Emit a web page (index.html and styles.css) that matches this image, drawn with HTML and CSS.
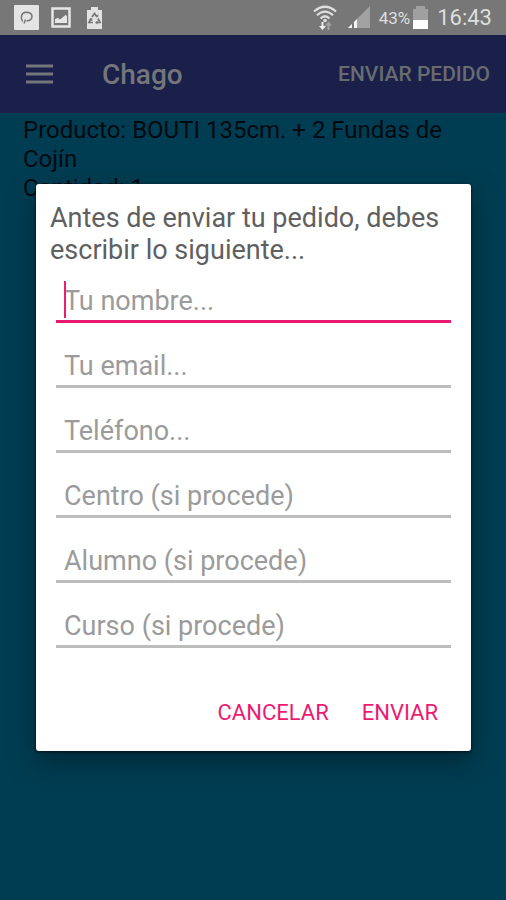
FILE: index.html
```html
<!DOCTYPE html>
<html lang="es">
<head>
<meta charset="utf-8">
<meta name="viewport" content="width=device-width, initial-scale=1">
<title>Chago</title>
<link rel="stylesheet" href="styles.css">
</head>
<body>
<div class="status">
  <div class="status-group notices">
    <svg width="25" height="25" viewBox="0 0 25 25" aria-hidden="true">
      <rect width="25" height="25" rx="1" fill="#e4e4e4"/>
      <path d="M8.500 16.500C6 12 7.500 7.500 12 7.200c4 0 6 2 6 4.300 0 3-2.500 4.500-5.500 4.200M10 18.500l1.500-4" fill="none" stroke="#777" stroke-width="1.500"/>
    </svg>
    <svg width="20" height="22" viewBox="0 0 20 22" aria-hidden="true">
      <rect x="1.500" y="1.500" width="17" height="18" fill="none" stroke="#e6e6e6" stroke-width="2.500"/>
      <path d="M4 16v-4l3-1 2 1.500L14.500 8 16 9v7z" fill="#e6e6e6"/>
    </svg>
    <svg width="17" height="22" viewBox="0 0 17 22" aria-hidden="true">
      <path d="M1 3h4V0h7v3h4v19H1z" fill="#e2e2e2"/>
      <path d="M6 10l2.500-3.500L11 10M12 11.500l2 4h-4M7 15.500H3l2-4" fill="none" stroke="#777" stroke-width="1.700"/>
      <path d="M10 8.500l2 2 .5-3zM11.500 13.500v4l-2.500-2zM3 12.500l3-1.500.5 3z" fill="#777"/>
    </svg>
  </div>
  <div class="status-group">
    <svg class="wifi" width="24" height="26" viewBox="0 0 24 26" aria-hidden="true">
      <g fill="none" stroke="#dedede" stroke-width="2.200">
        <path d="M1 6.500Q12-3 23 6.500M4 10.200Q12 3 20 10.200M7.500 13.500Q12 9 16.500 13.500"/>
      </g>
      <circle cx="12" cy="15.500" r="1.800" fill="#dedede"/>
      <path d="M8.500 17h2v4H13l-3.500 4L6 21h2.500z" fill="#eee"/>
      <path d="M14.500 25v-4.500H12l3.500-4 3.500 4h-2.500V25z" fill="#a4a4a4"/>
    </svg>
    <svg class="signal" width="23" height="23" viewBox="0 0 23 23" aria-hidden="true">
      <path d="M0 22L22 0v22z" fill="#a2a2a2"/>
      <path d="M0 22l4-4v4zM6 22v-6l3-3v9z" fill="#f4f4f4"/>
      <path d="M4 22v-4l2-2v6z" fill="#777"/>
    </svg>
    <span class="percent">43%</span>
    <svg class="battery" width="15" height="23" viewBox="0 0 15 23" aria-hidden="true">
      <path d="M0 3h3V0h9v3h3v12H0z" fill="#a0a0a0"/>
      <path d="M0 14h15v9H0z" fill="#fff"/>
    </svg>
    <span class="clock">16:43</span>
  </div>
</div>
<div class="screen">
  <header class="bar">
    <button class="menu" type="button" aria-label="Menú">
      <svg width="27" height="20" viewBox="0 0 27 20" aria-hidden="true">
        <path d="M0 2h27M0 10h27M0 18h27" stroke="#747679" stroke-width="3"/>
      </svg>
    </button>
    <h1 class="brand">Chago</h1>
    <button class="send" type="button">ENVIAR PEDIDO</button>
  </header>
  <main class="order">
    <p>Producto: BOUTI 135cm. + 2 Fundas de Cojín</p>
    <p>Cantidad: 1</p>
  </main>
  <div class="overlay">
    <form class="dialog" role="dialog" aria-labelledby="dialog-title">
      <h2 class="dialog-title" id="dialog-title">Antes de enviar tu pedido, debes escribir lo siguiente...</h2>
      <div class="fields">
        <div class="field active"><span class="caret"></span><input type="text" aria-label="Tu nombre" placeholder="Tu nombre..."></div>
        <div class="field"><input type="email" aria-label="Tu email" placeholder="Tu email..."></div>
        <div class="field"><input type="tel" aria-label="Teléfono" placeholder="Teléfono..."></div>
        <div class="field"><input type="text" aria-label="Centro" placeholder="Centro (si procede)"></div>
        <div class="field"><input type="text" aria-label="Alumno" placeholder="Alumno (si procede)"></div>
        <div class="field"><input type="text" aria-label="Curso" placeholder="Curso (si procede)"></div>
      </div>
      <div class="actions">
        <button type="button">CANCELAR</button>
        <button type="submit">ENVIAR</button>
      </div>
    </form>
  </div>
</div>
</body>
</html>
```
FILE: styles.css
```css
* {
  box-sizing: border-box;
}

body {
  margin: 0;
  min-height: 100vh;
  display: flex;
  flex-direction: column;
  background: #003d52;
  font-family: Roboto, "Liberation Sans", sans-serif;
}

h1, h2, p {
  margin: 0;
  font-weight: 400;
}

button {
  padding: 0;
  border: 0;
  background: none;
  font-family: inherit;
}

svg {
  display: block;
}

.status {
  display: flex;
  justify-content: space-between;
  align-items: center;
  height: 35px;
  padding: 0 14px;
  background: #777;
  color: #dedede;
}

.status-group {
  display: flex;
  align-items: center;
}

.notices {
  gap: 12px;
}

.notices svg:last-child {
  margin-left: 3px;
}

.wifi {
  margin-right: 11px;
}

.signal {
  margin-right: 8px;
}

.percent {
  font-size: 17px;
}

.battery {
  margin: 0 9px 0 3px;
}

.clock {
  font-size: 22px;
}

.screen {
  position: relative;
  flex: 1;
}

.bar {
  display: flex;
  align-items: center;
  height: 78px;
  padding: 0 16px 0 26px;
  background: #1a204a;
  color: #747679;
}

.brand {
  flex: 1;
  margin-left: 49px;
  font-size: 28px;
  font-weight: 500;
}

.send {
  color: #686c70;
  font-size: 21px;
  font-weight: 500;
}

.order {
  padding: 3px 23px;
  color: #000a10;
  font-size: 24px;
  line-height: 29px;
}

.overlay {
  position: absolute;
  inset: 0;
  display: flex;
  align-items: center;
  padding: 0 35px 0 36px;
}

.dialog {
  flex: 1;
  padding: 18px 20px 18px 14px;
  border-radius: 3px;
  background: #fff;
  box-shadow: 0 1px 3px #001018, 0 10px 26px rgba(0, 20, 28, 0.5);
}

.dialog-title {
  color: #606060;
  font-size: 27px;
  line-height: 32px;
}

.fields {
  display: grid;
  gap: 16px;
  margin: 8px 0 0 6px;
}

.field {
  position: relative;
  height: 49px;
  border-bottom: 3px solid #bdbdbd;
}

.field.active {
  border-color: #e8196f;
}

.caret {
  position: absolute;
  left: 8px;
  top: 7px;
  width: 2px;
  height: 37px;
  background: #f01c74;
}

.field input {
  width: 100%;
  height: 46px;
  padding: 8px 8px 0;
  border: 0;
  outline: 0;
  background: none;
  color: #606060;
  font-family: inherit;
  font-size: 27px;
}

.field input::placeholder {
  color: #9b9b9b;
  opacity: 1;
}

.actions {
  display: flex;
  justify-content: flex-end;
  gap: 33px;
  margin-top: 44px;
  padding: 0 13px 1px 0;
}

.actions button {
  height: 40px;
  color: #ec1a72;
  font-size: 22px;
}
```
